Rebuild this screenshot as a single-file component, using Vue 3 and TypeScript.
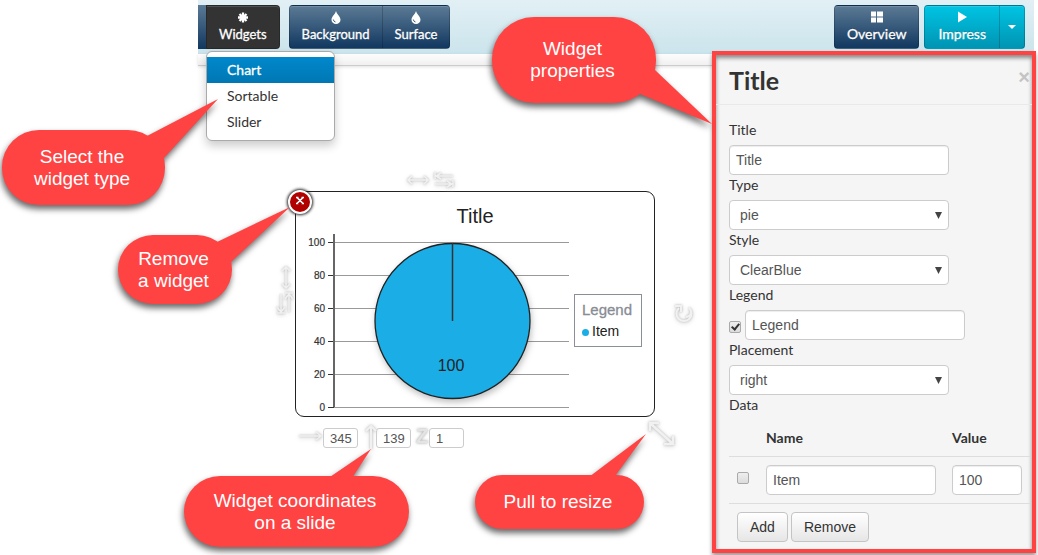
<script setup lang="ts">
import { ref } from 'vue'

interface Callout {
  name: string
  lines: string[]
  radius: number
  tail: string
}

const widgetTypes = ['Chart', 'Sortable', 'Slider']
const title = ref('Title')
const chartType = ref('pie')
const chartStyle = ref('ClearBlue')
const legendShown = ref(true)
const legend = ref('Legend')
const placement = ref('right')
const rows = ref([{ picked: false, name: 'Item', value: '100' }])
const position = ref({ x: '345', y: '139', z: '1' })

const ticks = [
  { label: '100', y: 51 },
  { label: '80', y: 84 },
  { label: '60', y: 117 },
  { label: '40', y: 150 },
  { label: '20', y: 183 },
  { label: '0', y: 216 },
]

/* Tail points are relative to the top left corner of each bubble. */
const callouts: Callout[] = [
  { name: 'select', lines: ['Select the', 'widget type'], radius: 37, tail: '110,30 145,6 216,-31 162,28 130,50' },
  { name: 'remove', lines: ['Remove', 'a widget'], radius: 35, tail: '80,30 99,7 172,-28 113,27 90,45' },
  { name: 'properties', lines: ['Widget', 'properties'], radius: 42, tail: '130,50 163,53 220,107 148,77' },
  { name: 'coordinates', lines: ['Widget coordinates', 'on a slide'], radius: 36, tail: '140,5 187,-27 166,5' },
  { name: 'resize', lines: ['Pull to resize'], radius: 27, tail: '110,5 171,-41 137,5' },
]

function addRow() {
  rows.value.push({ picked: false, name: 'Item', value: '100' })
}
function removeRows() {
  rows.value = rows.value.filter((row) => !row.picked)
}
</script>

<template>
  <div class="page">
    <header class="topbar">
      <div class="group group--cut">
        <span class="stub"></span>
        <div class="menu-holder">
          <button class="tool tool--open" type="button">
            <svg width="12" height="12" viewBox="0 0 12 12" class="icon">
              <path d="M6 1v10M1 6h10M2.5 2.5l7 7M9.5 2.5l-7 7" stroke="#fff" stroke-width="2.3" />
            </svg>
            Widgets
          </button>
          <ul class="menu">
            <li v-for="(item, i) in widgetTypes" :key="item">
              <a href="#" :class="{ current: i === 0 }">{{ item }}</a>
            </li>
          </ul>
        </div>
      </div>
      <div class="group group--paint">
        <button v-for="name in ['Background', 'Surface']" :key="name" class="tool" type="button">
          <svg width="10" height="13" viewBox="0 0 10 13" class="icon">
            <path d="M5 0C5.600 3 9.500 5.500 9.500 8.700A4.500 4.300 0 0 1 .5 8.700C.5 5.500 4.400 3 5 0z" fill="#fff" />
            <path d="M2.300 8.500q.2 2 2.200 2.500" fill="none" stroke="#43617f" stroke-width="1" />
          </svg>
          {{ name }}
        </button>
      </div>
      <div class="group group--end">
        <button class="tool tool--overview" type="button">
          <svg width="12" height="12" viewBox="0 0 12 12" class="icon">
            <path d="M0 0h5v5H0zM6 0h6v5H6zM0 6h5v5H0zM6 6h6v5H6z" fill="#fff" />
          </svg>
          Overview
        </button>
      </div>
      <div class="group">
        <button class="tool tool--go" type="button">
          <svg width="10" height="12" viewBox="0 0 10 12" class="icon"><path d="M1 0l9 5.500L1 11z" fill="#fff" /></svg>
          Impress
        </button>
        <button class="tool tool--go tool--caret" type="button" aria-label="More ways to present">
          <svg width="8" height="4" viewBox="0 0 8 4"><path d="M0 0h8L4 4z" fill="#fff" /></svg>
        </button>
      </div>
    </header>

    <div class="body">
      <main class="canvas">
        <div class="ledge"></div>
        <section class="widget">
          <svg class="chart" viewBox="0 0 360 226" role="img" aria-label="Pie chart">
            <text x="180" y="32" class="chart-title">{{ title }}</text>
            <g v-for="t in ticks" :key="t.label">
              <path :d="`M39 ${t.y + 0.5}H274`" stroke="#999" />
              <path :d="`M33 ${t.y + 0.5}h6`" stroke="#333" />
              <text x="30" :y="t.y + 4" class="tick">{{ t.label }}</text>
            </g>
            <path d="M39 43v173" stroke="#666" stroke-width="2" />
            <circle class="pie" cx="157.500" cy="130" r="77.500" />
            <path d="M157.500 52v78" stroke="#333" stroke-width="1.500" />
            <text x="156" y="180" class="pie-label">100</text>
            <rect x="279.500" y="103.500" width="67" height="52" fill="#fff" stroke="#8b8f98" />
            <text x="287" y="124" class="legend-title">{{ legend }}</text>
            <circle cx="290.500" cy="141.500" r="3.500" fill="#1aade6" />
            <text x="297" y="145" class="legend-item">Item</text>
          </svg>

          <button class="delete" type="button" aria-label="Remove">
            <svg width="10" height="10" viewBox="0 0 10 10"><path d="M2 1.500l6 6M8 1.500l-6 6M1 1.500h2.500M6.500 1.500H9M1 7.500h2.500M6.500 7.500H9" stroke="#fff" stroke-width="1.700" /></svg>
          </button>

          <svg class="ghost ghost--top" width="52" height="20" viewBox="0 0 52 20">
            <path d="M4 10h20M8 6l-4 4 4 4M20 6l4 4-4 4M31 2v7M49 10v7M32 6h17M37 3l-5 3 5 3M31 14h17M43 11l5 3-5 3" />
          </svg>
          <svg class="ghost ghost--left" width="20" height="52" viewBox="0 0 20 52">
            <path d="M11 2v21M7 6l4-4 4 4M7 19l4 4 4-4M6 29v18M2 42l4 5 4-5M2 48h8M14 29v18M10 34l4-5 4 5M10 28h8" />
          </svg>
          <svg class="ghost ghost--turn" width="24" height="22" viewBox="0 0 24 22">
            <path d="M7 5a7.500 7.500 0 1 0 10 0M3 3h6v6M17 5a5 5 0 0 1-3 9" stroke-width="2" />
          </svg>
          <svg class="ghost ghost--resize" width="32" height="30" viewBox="0 0 32 30">
            <path d="M4 3l23 21M4 11V3h9M18 24h9v-8" stroke-width="2.500" />
          </svg>

          <div class="coords">
            <label class="coord" aria-label="X">
              <svg class="ghost" width="28" height="19" viewBox="0 0 28 19"><path d="M4 8h22M21 4l5 4-5 4" /></svg>
              <input v-model="position.x" type="text" />
            </label>
            <label class="coord" aria-label="Y">
              <svg class="ghost" width="18" height="26" viewBox="0 0 18 26"><path d="M13 25V2M8 7l5-5 5 5" stroke-width="2" /></svg>
              <input v-model="position.y" type="text" />
            </label>
            <label class="coord">
              <span class="depth">Z</span>
              <input v-model="position.z" type="text" />
            </label>
          </div>
        </section>
      </main>

      <aside class="panel">
        <div class="panel-head">
          <h3>{{ title }}</h3>
          <button class="close" type="button" aria-label="Close">×</button>
        </div>
        <form class="form" @submit.prevent>
          <label for="f-title">Title</label>
          <input id="f-title" v-model="title" class="field" type="text" />
          <label for="f-type">Type</label>
          <div class="select">
            <select id="f-type" v-model="chartType" class="field"><option>pie</option><option>bar</option></select>
            <svg width="7" height="8" viewBox="0 0 7 8"><path d="M0 1h7L3.500 8z" /></svg>
          </div>
          <label for="f-style">Style</label>
          <div class="select">
            <select id="f-style" v-model="chartStyle" class="field"><option>ClearBlue</option></select>
            <svg width="7" height="8" viewBox="0 0 7 8"><path d="M0 1h7L3.500 8z" /></svg>
          </div>
          <label for="f-legend">Legend</label>
          <div class="legend-row">
            <input v-model="legendShown" class="tickbox" type="checkbox" aria-label="Show legend" />
            <input id="f-legend" v-model="legend" class="field" type="text" />
          </div>
          <label for="f-place">Placement</label>
          <div class="select">
            <select id="f-place" v-model="placement" class="field"><option>right</option><option>left</option></select>
            <svg width="7" height="8" viewBox="0 0 7 8"><path d="M0 1h7L3.500 8z" /></svg>
          </div>
          <div class="caption">Data</div>
          <table>
            <thead>
              <tr><th class="pick"></th><th>Name</th><th class="value">Value</th></tr>
            </thead>
            <tbody>
              <tr v-for="(row, i) in rows" :key="i">
                <td><input v-model="row.picked" class="tickbox" type="checkbox" aria-label="Pick row" /></td>
                <td><input v-model="row.name" class="field field--cell" type="text" aria-label="Name" /></td>
                <td><input v-model="row.value" class="field field--cell" type="text" aria-label="Value" /></td>
              </tr>
            </tbody>
          </table>
          <div class="actions">
            <button type="button" @click="addRow">Add</button>
            <button type="button" @click="removeRows">Remove</button>
          </div>
        </form>
      </aside>
    </div>

    <div v-for="c in callouts" :key="c.name" class="callout" :class="`callout--${c.name}`">
      <svg>
        <rect width="100%" height="100%" :rx="c.radius" />
        <polygon :points="c.tail" />
      </svg>
      <p><span v-for="line in c.lines" :key="line">{{ line }}</span></p>
    </div>
  </div>
</template>

<style>
body {
  background: #fff;
}
</style>

<style scoped>
.page {
  position: relative;
  box-sizing: border-box;
  min-height: 100vh;
  padding-left: 198px;
  overflow: hidden;
  color: #333;
  font: 14px/20px Lato, sans-serif;
}
button,
input,
select {
  box-sizing: border-box;
  margin: 0;
}
.topbar {
  display: flex;
  gap: 5px;
  height: 54px;
  box-sizing: border-box;
  margin-right: 4px;
  padding: 5px 9px 5px 0;
  background: linear-gradient(#e2f0f5, #cbe4ec);
}
.group {
  display: flex;
}
.group--paint {
  margin-left: 4px;
}
.group--end {
  margin-left: auto;
}
.stub {
  width: 8px;
  background: linear-gradient(#5b7a95, #123860);
}
.menu-holder {
  position: relative;
}
.tool {
  display: flex;
  flex-direction: column;
  align-items: center;
  height: 44px;
  padding: 5px 12px 0;
  border: 1px solid rgba(0, 0, 0, 0.2);
  border-right-width: 0;
  background: linear-gradient(#5b7a95, #123860);
  color: #fff;
  font: 14px/20px Lato, sans-serif;
  -webkit-text-stroke: 0.3px #fff;
  text-shadow: 0 -1px 0 rgba(0, 0, 0, 0.25);
  box-shadow: inset 0 1px 0 rgba(255, 255, 255, 0.15);
}
.group--cut .tool,
.group--paint .tool {
  font-size: 13px;
}
.tool:first-child {
  border-radius: 4px 0 0 4px;
}
.tool:last-child {
  border-right-width: 1px;
  border-radius: 0 4px 4px 0;
}
.tool:only-child {
  border-radius: 4px;
}
.menu-holder .tool--open {
  border-radius: 0 4px 4px 0;
  border-right-width: 1px;
  background: #333;
}
.icon {
  flex: none;
  height: 13px;
}
.tool--go {
  padding: 5px 13px 0;
  background: linear-gradient(#00c4e3, #0094b3);
}
.tool--caret {
  justify-content: center;
  padding: 0 8px;
}
.menu {
  position: absolute;
  z-index: 2;
  top: 46px;
  left: 0;
  width: 129px;
  box-sizing: border-box;
  margin: 0;
  padding: 5px 0;
  border: 1px solid #aaa;
  border-radius: 6px;
  background: #fff;
  box-shadow: 0 5px 10px rgba(0, 0, 0, 0.2);
  list-style: none;
}
.menu a {
  display: block;
  padding: 3px 20px;
  color: #333;
  text-decoration: none;
}
.menu a.current {
  background: linear-gradient(#0088cc, #0077b3);
  color: #fff;
  -webkit-text-stroke: 0.3px #fff;
}
.body {
  display: flex;
  align-items: flex-start;
}
.canvas {
  position: relative;
  flex: 1;
}
.ledge {
  height: 11px;
  border-bottom: 1px solid #ccc;
  background: linear-gradient(#fdfdfd, #f0f0f0);
  box-shadow: 0 1px 3px rgba(0, 0, 0, 0.12);
}
.widget {
  position: absolute;
  top: 137px;
  left: 97px;
  width: 360px;
  height: 226px;
  box-sizing: border-box;
  border: 1px solid #222;
  border-radius: 9px;
}
.chart {
  display: block;
  width: 360px;
  height: 226px;
  margin: -1px;
  font-family: "Liberation Sans", Arial, sans-serif;
}
.chart-title {
  font-size: 20px;
  text-anchor: middle;
  fill: #222;
}
.tick {
  font-size: 10px;
  text-anchor: end;
  fill: #333;
  stroke: #333;
  stroke-width: 0.2px;
}
.pie {
  fill: #1aade6;
  stroke: #222;
  stroke-width: 1.3px;
  filter: drop-shadow(1px 3px 3px rgba(0, 0, 0, 0.25));
}
.pie-label {
  font-size: 16px;
  text-anchor: middle;
  fill: #222;
}
.legend-title {
  font-size: 15px;
  fill: #888c94;
  stroke: #888c94;
  stroke-width: 0.3px;
}
.legend-item {
  font-size: 14px;
  fill: #222;
}
.delete {
  position: absolute;
  top: -2px;
  left: -8px;
  width: 24px;
  height: 24px;
  padding: 0 0 3px;
  border: 2px solid #fff;
  border-radius: 50%;
  background: #b00000;
  box-shadow: 0 0 3px 1px #222;
  line-height: 0;
}
.ghost {
  overflow: visible;
  fill: none;
  stroke: #f1f1f1;
  stroke-width: 1.5;
  filter: drop-shadow(0 0 1px #bbb) drop-shadow(0 1px 2px #ddd);
}
.ghost--top,
.ghost--left,
.ghost--turn,
.ghost--resize {
  position: absolute;
}
.ghost--top {
  top: -22px;
  left: 108px;
}
.ghost--left {
  top: 73px;
  left: -21px;
}
.ghost--turn {
  top: 111px;
  left: 376px;
}
.ghost--resize {
  top: 228px;
  left: 350px;
}
.coords {
  position: absolute;
  top: 236px;
  left: -1px;
  display: flex;
}
.coord {
  display: flex;
  height: 20px;
}
.coord .ghost {
  margin-top: -4px;
}
.coord:first-child .ghost {
  margin-top: 0;
}
.coord input {
  width: 35px;
  height: 20px;
  padding: 0 0 0 6px;
  border: 1px solid #ccc;
  border-radius: 3px;
  background: #fff;
  color: #555;
  font: 13px/18px "Liberation Sans", Arial, sans-serif;
}
.depth {
  width: 18px;
  box-sizing: border-box;
  padding-left: 5px;
  color: #e4e4e4;
  font: bold 20px/16px "Liberation Sans", Arial, sans-serif;
  text-shadow: 0 0 3px #999;
}
.panel {
  position: relative;
  z-index: 1;
  width: 324px;
  box-sizing: border-box;
  margin: -3px 2px 0 0;
  border: 4px solid #ff4343;
  background: #f5f5f5;
  box-shadow: 0 3px 4px rgba(0, 0, 0, 0.4), inset 0 3px 4px rgba(0, 0, 0, 0.45);
}
.panel-head {
  display: flex;
  align-items: center;
  justify-content: space-between;
  height: 49px;
  padding: 0 2px 0 13px;
  border-bottom: 1px solid #e9e9e9;
}
h3 {
  margin: 0;
  font: bold 25px/40px Lato, sans-serif;
}
.close {
  padding: 0;
  border: 0;
  background: none;
  color: #c4c4c4;
  font: bold 20px/20px "Liberation Sans", Arial, sans-serif;
  margin-top: -6px;
}
.form {
  padding: 15px 2px 7px 13px;
}
.form > label,
.caption {
  display: block;
  height: 25px;
  line-height: 20px;
}
.field {
  display: block;
  width: 220px;
  height: 30px;
  padding: 4px 6px;
  border: 1px solid #ccc;
  border-radius: 4px;
  background: #fff;
  color: #555;
  font: 14px/20px "Liberation Sans", Arial, sans-serif;
  box-shadow: inset 0 1px 1px rgba(0, 0, 0, 0.075);
}
.field--cell {
  width: 100%;
}
.select {
  position: relative;
  width: 220px;
}
.select .field {
  padding: 4px 10px;
  appearance: none;
  box-shadow: none;
}
.select svg {
  position: absolute;
  top: 11px;
  right: 7px;
  fill: #444;
  pointer-events: none;
}
.legend-row {
  display: flex;
  gap: 4px;
  align-items: center;
}
.tickbox {
  display: block;
  width: 12px;
  height: 12px;
  appearance: none;
  border: 1px solid #aaa;
  border-radius: 2px;
  background: linear-gradient(#eee, #dcdcdc);
}
.legend-row .tickbox {
  margin-top: 4px;
}
.tickbox:checked::after {
  display: block;
  width: 3px;
  height: 6px;
  margin: 0 0 0 3px;
  border: solid #333;
  border-width: 0 2px 2px 0;
  content: "";
  transform: rotate(40deg);
}
table {
  width: 100%;
  border-collapse: separate;
  border-spacing: 0;
  table-layout: fixed;
}
th {
  padding: 8px;
  text-align: left;
}
td {
  padding: 8px;
  border-top: 1px solid #ddd;
}
.pick {
  width: 13px;
}
.value {
  width: 70px;
}
td .tickbox {
  margin-top: -4px;
}
.actions {
  display: flex;
  gap: 3px;
  padding: 8px 8px 0;
  border-top: 1px solid #ddd;
}
.actions button {
  height: 30px;
  padding: 4px 12px;
  border: 1px solid #c4c4c4;
  border-radius: 4px;
  background: linear-gradient(#fff, #e6e6e6);
  color: #333;
  font: 14px/20px "Liberation Sans", Arial, sans-serif;
}
.callout {
  position: absolute;
  z-index: 3;
  display: flex;
  align-items: center;
  justify-content: center;
  color: #fff;
  font: 19px/22px "Liberation Sans", Arial, sans-serif;
  pointer-events: none;
}
.callout svg {
  position: absolute;
  inset: 0;
  width: 100%;
  height: 100%;
  overflow: visible;
  fill: #ff4343;
  filter: drop-shadow(-1px 4px 3px rgba(0, 0, 0, 0.6));
}
.callout p {
  position: relative;
  margin: 0;
  padding-right: 3px;
  text-align: center;
}
.callout span {
  display: block;
  white-space: nowrap;
}
.callout--select {
  top: 130px;
  left: 2px;
  width: 163px;
  height: 75px;
}
.callout--remove {
  top: 235px;
  left: 118px;
  width: 114px;
  height: 69px;
}
.callout--properties {
  top: 17px;
  right: 382px;
  width: 164px;
  height: 86px;
}
.callout--coordinates {
  top: 476px;
  left: 184px;
  width: 225px;
  height: 71px;
}
.callout--resize {
  top: 475px;
  left: 475px;
  width: 169px;
  height: 54px;
}
</style>
